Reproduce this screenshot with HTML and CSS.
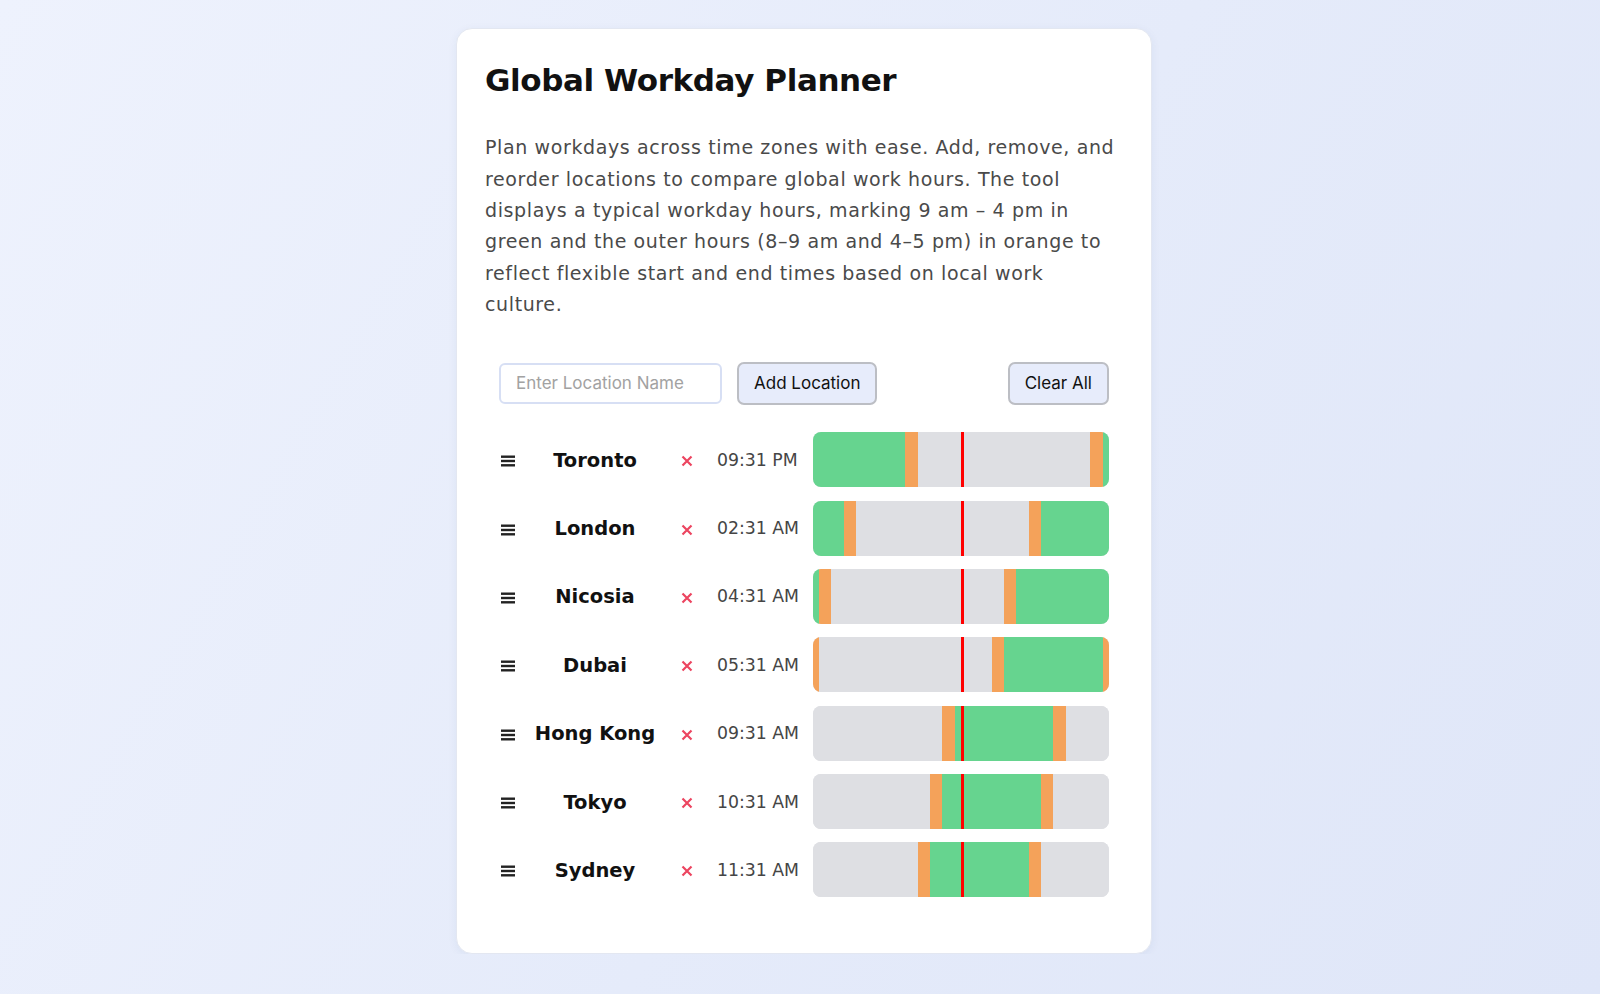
FILE: index.html
```html
<!DOCTYPE html>
<html lang="en">
<head>
    <meta charset="UTF-8">
    <meta name="viewport" content="width=device-width, initial-scale=1.0">
    <title>Global Workday Planner</title>
    <link rel="stylesheet" href="styles.css">
</head>
<body>

    <div class="container">
        <h1>Global Workday Planner</h1>
        <p class="intro">Plan workdays across time zones with ease. Add, remove, and reorder locations to compare global work hours. The tool displays a typical workday hours, marking 9 am – 4 pm in green and the outer hours (8–9 am and 4–5 pm) in orange to reflect flexible start and end times based on local work culture.</p>

        <div class="controls">
            <input type="text" class="location-input" placeholder="Enter Location Name">
            <button class="btn">Add Location</button>
            <button class="btn clear-btn">Clear All</button>
        </div>

        <div class="locations">
            <div class="row">
                <span class="handle"><svg width="14" height="12" viewBox="0 0 14 12"><rect y="0.5" width="14" height="2.4"/><rect y="4.8" width="14" height="2.4"/><rect y="9.1" width="14" height="2.4"/></svg></span>
                <span class="name">Toronto</span>
                <span class="remove"><svg width="12" height="12" viewBox="0 0 12 12"><path d="M1.5 1.5 L10.5 10.5 M10.5 1.5 L1.5 10.5"/></svg></span>
                <span class="time">09:31 PM</span>
                <div class="bar">
                    <span class="seg work" style="width:31.181%"></span>
                    <span class="seg edge" style="width:4.167%"></span>
                    <span class="seg off" style="width:58.333%"></span>
                    <span class="seg edge" style="width:4.167%"></span>
                    <span class="seg work" style="width:2.152%"></span>
                    <span class="now"></span>
                </div>
            </div>
            <div class="row">
                <span class="handle"><svg width="14" height="12" viewBox="0 0 14 12"><rect y="0.5" width="14" height="2.4"/><rect y="4.8" width="14" height="2.4"/><rect y="9.1" width="14" height="2.4"/></svg></span>
                <span class="name">London</span>
                <span class="remove"><svg width="12" height="12" viewBox="0 0 12 12"><path d="M1.5 1.5 L10.5 10.5 M10.5 1.5 L1.5 10.5"/></svg></span>
                <span class="time">02:31 AM</span>
                <div class="bar">
                    <span class="seg work" style="width:10.347%"></span>
                    <span class="seg edge" style="width:4.167%"></span>
                    <span class="seg off" style="width:58.333%"></span>
                    <span class="seg edge" style="width:4.167%"></span>
                    <span class="seg work" style="width:22.986%"></span>
                    <span class="now"></span>
                </div>
            </div>
            <div class="row">
                <span class="handle"><svg width="14" height="12" viewBox="0 0 14 12"><rect y="0.5" width="14" height="2.4"/><rect y="4.8" width="14" height="2.4"/><rect y="9.1" width="14" height="2.4"/></svg></span>
                <span class="name">Nicosia</span>
                <span class="remove"><svg width="12" height="12" viewBox="0 0 12 12"><path d="M1.5 1.5 L10.5 10.5 M10.5 1.5 L1.5 10.5"/></svg></span>
                <span class="time">04:31 AM</span>
                <div class="bar">
                    <span class="seg work" style="width:2.014%"></span>
                    <span class="seg edge" style="width:4.167%"></span>
                    <span class="seg off" style="width:58.333%"></span>
                    <span class="seg edge" style="width:4.167%"></span>
                    <span class="seg work" style="width:31.319%"></span>
                    <span class="now"></span>
                </div>
            </div>
            <div class="row">
                <span class="handle"><svg width="14" height="12" viewBox="0 0 14 12"><rect y="0.5" width="14" height="2.4"/><rect y="4.8" width="14" height="2.4"/><rect y="9.1" width="14" height="2.4"/></svg></span>
                <span class="name">Dubai</span>
                <span class="remove"><svg width="12" height="12" viewBox="0 0 12 12"><path d="M1.5 1.5 L10.5 10.5 M10.5 1.5 L1.5 10.5"/></svg></span>
                <span class="time">05:31 AM</span>
                <div class="bar">
                    <span class="seg edge" style="width:2.014%"></span>
                    <span class="seg off" style="width:58.333%"></span>
                    <span class="seg edge" style="width:4.167%"></span>
                    <span class="seg work" style="width:33.333%"></span>
                    <span class="seg edge" style="width:2.153%"></span>
                    <span class="now"></span>
                </div>
            </div>
            <div class="row">
                <span class="handle"><svg width="14" height="12" viewBox="0 0 14 12"><rect y="0.5" width="14" height="2.4"/><rect y="4.8" width="14" height="2.4"/><rect y="9.1" width="14" height="2.4"/></svg></span>
                <span class="name">Hong Kong</span>
                <span class="remove"><svg width="12" height="12" viewBox="0 0 12 12"><path d="M1.5 1.5 L10.5 10.5 M10.5 1.5 L1.5 10.5"/></svg></span>
                <span class="time">09:31 AM</span>
                <div class="bar">
                    <span class="seg off" style="width:43.681%"></span>
                    <span class="seg edge" style="width:4.167%"></span>
                    <span class="seg work" style="width:33.333%"></span>
                    <span class="seg edge" style="width:4.167%"></span>
                    <span class="seg off" style="width:14.652%"></span>
                    <span class="now"></span>
                </div>
            </div>
            <div class="row">
                <span class="handle"><svg width="14" height="12" viewBox="0 0 14 12"><rect y="0.5" width="14" height="2.4"/><rect y="4.8" width="14" height="2.4"/><rect y="9.1" width="14" height="2.4"/></svg></span>
                <span class="name">Tokyo</span>
                <span class="remove"><svg width="12" height="12" viewBox="0 0 12 12"><path d="M1.5 1.5 L10.5 10.5 M10.5 1.5 L1.5 10.5"/></svg></span>
                <span class="time">10:31 AM</span>
                <div class="bar">
                    <span class="seg off" style="width:39.514%"></span>
                    <span class="seg edge" style="width:4.167%"></span>
                    <span class="seg work" style="width:33.333%"></span>
                    <span class="seg edge" style="width:4.167%"></span>
                    <span class="seg off" style="width:18.819%"></span>
                    <span class="now"></span>
                </div>
            </div>
            <div class="row">
                <span class="handle"><svg width="14" height="12" viewBox="0 0 14 12"><rect y="0.5" width="14" height="2.4"/><rect y="4.8" width="14" height="2.4"/><rect y="9.1" width="14" height="2.4"/></svg></span>
                <span class="name">Sydney</span>
                <span class="remove"><svg width="12" height="12" viewBox="0 0 12 12"><path d="M1.5 1.5 L10.5 10.5 M10.5 1.5 L1.5 10.5"/></svg></span>
                <span class="time">11:31 AM</span>
                <div class="bar">
                    <span class="seg off" style="width:35.347%"></span>
                    <span class="seg edge" style="width:4.167%"></span>
                    <span class="seg work" style="width:33.333%"></span>
                    <span class="seg edge" style="width:4.167%"></span>
                    <span class="seg off" style="width:22.986%"></span>
                    <span class="now"></span>
                </div>
            </div>
        </div>
    </div>

</body>
</html>
```

FILE: styles.css
```css
html {
    min-height: 100%;
    background: linear-gradient(120deg, #eef2fd 0%, #e5ebfa 55%, #dfe6f8 100%);
}
body {
    font-family: "DejaVu Sans", sans-serif;
    color: #111;
    margin: 0;
    padding: 28px 0 0 8px;
}
.container {
    box-sizing: border-box;
    width: 696px;
    margin: 0 auto;
    background: #fff;
    padding: 33px 28px 34px;
    border: 1px solid #e3e7f1;
    border-radius: 16px;
    box-shadow: 0 2px 10px rgba(40, 60, 120, 0.06);
}
h1 {
    font-size: 31px;
    line-height: 1.2;
    letter-spacing: -0.4px;
    font-weight: bold;
    color: #111;
    margin: 0;
}
.intro {
    font-size: 19px;
    line-height: 31.4px;
    letter-spacing: 0.62px;
    color: #4a4a4a;
    margin: 33px 0 0;
}

.controls {
    display: flex;
    align-items: center;
    gap: 15px;
    margin-top: 41px;
    padding: 0 14px;
}
.location-input {
    box-sizing: border-box;
    width: 223px;
    height: 41px;
    padding: 0 15px;
    font-family: "Inter", sans-serif;
    font-size: 17px;
    color: #222;
    border: 2px solid #d7dff4;
    border-radius: 6px;
    outline: none;
}
.location-input::placeholder {
    color: #a2a2a2;
}
.btn {
    box-sizing: border-box;
    height: 43px;
    padding: 0 15px;
    font-family: "Inter", sans-serif;
    font-size: 17px;
    color: #111;
    background: #e7ecfb;
    border: 2px solid #bcbec4;
    border-radius: 7px;
}
.clear-btn {
    margin-left: auto;
}

.locations {
    display: flex;
    flex-direction: column;
    gap: 13.4px;
    margin: 27.5px 0 22px;
}
.row {
    display: grid;
    grid-template-columns: 34px 124px 60px 96px 1fr;
    align-items: center;
    padding: 0 14px;
}
.handle {
    display: flex;
    padding: 3px 0 0 2px;
}
.handle svg {
    fill: #222;
}
.name {
    font-size: 19.5px;
    font-weight: bold;
    text-align: center;
    white-space: nowrap;
    padding-top: 1px;
}
.remove {
    display: flex;
    justify-content: center;
    padding-top: 3px;
}
.remove svg {
    stroke: #ec4560;
    stroke-width: 2.2;
    fill: none;
}
.time {
    font-size: 17.3px;
    color: #454545;
    white-space: nowrap;
}
.bar {
    position: relative;
    display: flex;
    height: 55px;
    border-radius: 8px;
    overflow: hidden;
    background: #dedfe3;
}
.seg {
    height: 100%;
}
.work {
    background: #66d48f;
}
.edge {
    background: #f4a25a;
}
.off {
    background: #dedfe3;
}
.now {
    position: absolute;
    top: 0;
    bottom: 0;
    left: 50%;
    width: 3px;
    background: #ff0000;
}
```
